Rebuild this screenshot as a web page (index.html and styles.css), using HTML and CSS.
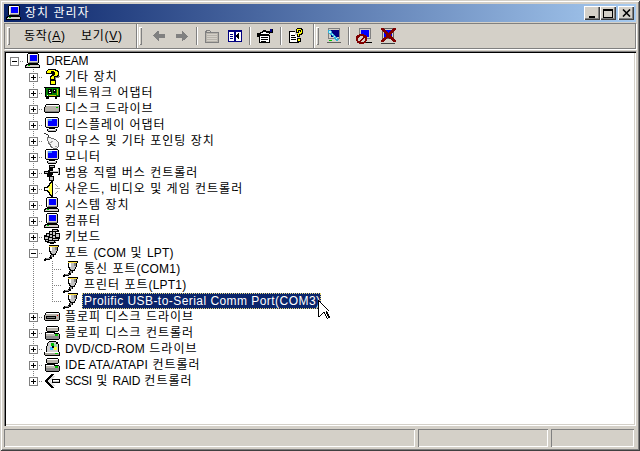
FILE: index.html
```html
<!DOCTYPE html>
<html lang="ko">
<head>
<meta charset="utf-8">
<title>장치 관리자</title>
<link rel="stylesheet" href="styles.css">
</head>
<body>
<svg class="defs" width="0" height="0" shape-rendering="crispEdges">
  <symbol id="i-pc" viewBox="0 0 16 16">
    <path d="M3 0h10v1h1v9h-1v1H3v-1H2V1h1z" fill="#000"/>
    <path d="M3 1h10v9H3z" fill="#d4d0c8"/><path d="M3 1h9v1H4v7H3z" fill="#fff"/>
    <path d="M5 2h7v6H5z" fill="#00f"/><path d="M4 9h9v1H4z" fill="#808080"/>
    <path d="M1 11h13v1h1v3H0v-3h1z" fill="#000"/><path d="M2 12h12v2H1v-1h1z" fill="#d4d0c8"/><path d="M3 12h2v1H3z" fill="#0c0"/>
  </symbol>
  <symbol id="i-mon" viewBox="0 0 16 16">
    <path d="M2 0h12v1h1v9h-1v1H2v-1H1V1h1z" fill="#000"/>
    <path d="M2 1h12v9H2z" fill="#d4d0c8"/><path d="M2 1h11v1H3v7H2z" fill="#fff"/>
    <path d="M4 2h9v7H4z" fill="#00f"/><path d="M4 2h4v2H4z" fill="#4090ff"/>
    <path d="M5 11h6v1h2v2h-1v1H4v-1H3v-2h2z" fill="#000"/><path d="M4 12h8v2H4z" fill="#c0c0c0"/><path d="M5 12h6v1H5z" fill="#fff"/>
  </symbol>
  <symbol id="i-q" viewBox="0 0 16 16">
    <path d="M4 0h8v1h2v1h1v5h-1v1h-3v3H6V7h1V6h1V3H8v2H2V2h1V1h1z" fill="#000"/>
    <path d="M4 1h7v1h2v1h1v3h-1v1h-3v3H7V8h1V7h2V6h1V3h-1V2H7v2H3V2h1z" fill="#ff0"/>
    <path d="M6 11h6v5H6z" fill="#000"/><path d="M7 12h4v3H7z" fill="#ff0"/>
    <path d="M14 7h2v1h-1v1h-3v2h-1V8h3z" fill="#808080"/>
  </symbol>
  <symbol id="i-net" viewBox="0 0 16 16">
    <path d="M0 2h16v10h-3v2h-2v-2H5v2H2v-2H1V3H0z" fill="#000"/>
    <path d="M2 3h13v8H2z" fill="#008000"/><path d="M4 4h4v5H4zM9 4h3v4H9z" fill="#000"/><path d="M13 4h1v6h-1zM5 10h7v1H5z" fill="#c8c800"/><path d="M3 10h1v1H3zM5 5h1v1H5zM5 7h2v1H5zM10 5h1v1h-1z" fill="#fff"/>
  </symbol>
  <symbol id="i-disk" viewBox="0 0 16 16">
    <path d="M2 3h13v1h1v7h-1v1H1v-1H0V6h1V4h1z" fill="#000"/>
    <path d="M2 4h13v1H2z" fill="#fff"/><path d="M1 6h14v5H1zM2 5h13v1H2z" fill="#b8b4ac"/><path d="M12 6h2v1h-2z" fill="#0c0"/><path d="M15 5h0v6h0z" fill="#606060"/><path d="M1 10h14v1H1z" fill="#808080"/>
  </symbol>
  <symbol id="i-floppy" viewBox="0 0 16 16">
    <path d="M2 3h13v1h1v7h-1v1H1v-1H0V6h1V4h1z" fill="#000"/>
    <path d="M1 6h14v5H1zM2 5h13v1H2z" fill="#b8b4ac"/><path d="M2 4h13v1H2z" fill="#fff"/><path d="M2 7h10v3H2z" fill="#000"/><path d="M3 8h8v1H3z" fill="#808080"/><path d="M13 6h1v1h-1z" fill="#e00"/>
  </symbol>
  <symbol id="i-mouse" viewBox="0 0 16 16">
    <path d="M0 0h2v1h2v1h1v3H4V2H2V1H0z" fill="#303030"/>
    <path d="M3 4h4v1h3v1h2v1h1v1h1v1h1v5h-1v1h-1v1H9v-1H7v-1H6v-2H5v-1H4V8H3z" fill="#707070"/>
    <path d="M4 5h3v1h3v1h2v1h1v1h1v5h-1v1H9v-1H8v-1H7v-2H6v-1H5V8H4z" fill="#f4f4f4"/><path d="M5 9h2V8h2v1H8v1H6zM11 13h2v1h-2z" fill="#a8a8a8"/>
  </symbol>
  <symbol id="i-usb" viewBox="0 0 16 16">
    <path d="M5 0h6v3H9v3h5V3h2v7h-2V8H9v2H8v3H5v-1H3V9H0V6h4V5h1V3H5z" fill="#000"/>
    <path d="M6 1h4v1H6zM14 4h1v5h-1zM1 7h3v1H1zM6 6h8v1H6z" fill="#c0c0c0"/>
    <path d="M5 11h5v5H5z" fill="#000"/><path d="M6 12h3v3H6z" fill="#c0c0c0"/>
  </symbol>
  <symbol id="i-snd" viewBox="0 0 16 16">
    <path d="M7 0h2v16H7v-1H6v-1H5v-2H4v-1H3v-1H0V6h3V5h1V4h1V2h1V1h1z" fill="#000"/>
    <path d="M7 2h1v12H7v-1H6v-2H5v-1H4V9H1V7h3V6h1V5h1V3h1z" fill="#ffff40"/>
    <path d="M1 7h4v2H1z" fill="#fff"/>
    <path d="M11 7h5v1h-5zM11 3h1v1h1v1h1v1h-1V5h-1V4h-1zM11 12h1v-1h1v-1h1v1h-1v1h-1v1h-1z" fill="#a0a0a0"/>
  </symbol>
  <symbol id="i-kbd" viewBox="0 0 16 16">
    <path d="M8 0h6v1h1v2h-3v1h4v6h-1v2h-3v2h-2v1H6v-1H3v-1H1v-2H0V6h2V4h3V2h3z" fill="#000"/>
    <path d="M9 1h4v1H9zM6 3h2v2H6zM9 3h2v3H9zM3 5h2v2H3zM12 5h3v3h-3zM6 6h2v2H6zM1 8h3v2H1zM9 7h2v2H9zM5 9h3v2H5zM9 10h5v1H9zM2 11h2v1H2zM5 12h5v1H5zM11 12h1v1h-1z" fill="#c8c8c8"/>
  </symbol>
  <symbol id="i-port" viewBox="0 0 16 16">
    <path d="M5 0h10v2h-1v4h-1v2h-1v2h-2v2H8v2H6v1H2v1H0v-2h1v-1h4v-1h1v-2h1V9H6V7H5V2H5z" fill="#000"/>
    <path d="M5 1h9v1H5z" fill="#ffe040"/><path d="M6 2h7v4h-1v2h-1v1H8V8H7V6H6z" fill="#c0c0c0"/><path d="M6 2h2v4H6z" fill="#fff"/><path d="M11 2h2v3h-2z" fill="#808080"/>
    <path d="M2 13h4v1H2z" fill="#909090"/><path d="M7 10h2v2H7z" fill="#909090"/>
  </symbol>
  <symbol id="i-drv" viewBox="0 0 16 16">
    <path d="M3 1h11v1h1v4h-1v1H3V6H2V2h1z" fill="#000"/><path d="M3 2h11v1H3z" fill="#fff"/><path d="M3 3h11v3H3z" fill="#b8b4ac"/>
    <path d="M1 7h10v1h4v1h1v5h-1v1H2v-1H1V7z" fill="#000"/><path d="M2 8h8v1h5v2H2z" fill="#b8b4ac"/><path d="M2 8h8v1H2z" fill="#fff"/><path d="M2 11h13v3H2z" fill="#8c8c8c"/><path d="M11 9h3v2h-3z" fill="#00c000"/>
  </symbol>
  <symbol id="i-dvd" viewBox="0 0 16 16">
    <path d="M5 0h7v1h2v2h1v8h1v4H1v-1H0v-3h2V5h1V2h1V1h1z" fill="#000"/>
    <path d="M5 1h7v2h2v8H3V5h1V2h1z" fill="#d0d0d0"/><path d="M7 2h3v3H7z" fill="#00c000"/><path d="M10 3h3v3h-3z" fill="#a0e0a0"/><path d="M6 6h3v3H6z" fill="#40c0ff"/><path d="M10 6h3v3h-3z" fill="#ffff40"/><path d="M8 5h2v2H8z" fill="#000"/>
    <path d="M1 11h14v3H1z" fill="#a8a49c"/><path d="M1 11h14v1H1z" fill="#fff"/><path d="M11 12h3v1h-3z" fill="#0c0"/>
  </symbol>
  <symbol id="i-scsi" viewBox="0 0 16 16">
    <path d="M7 1h3v1H9v1H8v1H7v1H6v1H5v1H4v2h1v1h1v1h1v1h1v1h1v1h1v1H7v-1H6v-1H5v-1H4v-1H3v-1H2v-1H1V7h1V6h1V5h1V4h1V3h1V2h1z" fill="#000"/>
    <path d="M8 3h3v1h-1v1H9v1H8v1H7v2h1v1h1v1h1v1h1v1H8v-1H7v-1H6v-1H5V9H4V7h1V6h1V5h1V4h1z" fill="#e0e0e0"/>
    <path d="M8 6h8v4H8z" fill="#000"/><path d="M9 7h6v2H9z" fill="#c0c0c0"/><path d="M9 7h6v1H9z" fill="#fff"/>
  </symbol>
</svg>

<div class="window">
  <header class="titlebar">
    <svg class="ico"><use href="#i-pc"/></svg>
    <span class="title">장치 관리자</span>
    <div class="caption">
      <span class="capbtn"><svg viewBox="0 0 9 9" width="9" height="9" shape-rendering="crispEdges"><path d="M1 7h6v2H1z"/></svg></span>
      <span class="capbtn"><svg viewBox="0 0 10 9" width="10" height="9" shape-rendering="crispEdges"><path d="M0 0h10v2H0zM0 2h1v7H0zM9 2h1v7H9zM0 8h10v1H0z"/></svg></span>
      <span class="capbtn capclose"><svg viewBox="0 0 9 8" width="9" height="8"><path d="M1 .5L8 7.500M8 .5L1 7.500" stroke="#000" stroke-width="1.600"/></svg></span>
    </div>
  </header>

  <div class="rebar">
    <span class="grip"></span>
    <nav class="menu">
      <span class="menu-item">동작(<u>A</u>)</span>
      <span class="menu-item">보기(<u>V</u>)</span>
    </nav>
    <span class="band-sep"></span>
    <span class="grip"></span>
    <div class="tools tools-a">
      <svg class="tool" viewBox="0 0 16 16" shape-rendering="crispEdges"><path d="M7 3h1v3h6v4H8v3H7v-1H6v-1H5v-1H4V9H3V8H2V7h1V6h1V5h1V4h1V3z" fill="#808080"/></svg>
      <svg class="tool next" viewBox="0 0 16 16" shape-rendering="crispEdges"><path d="M8 3h1v1h1v1h1v1h1v1h1v1h1v1h-1v1h-1v1h-1v1H9v1H8v-3H2V6h6z" fill="#808080"/></svg>
      <span class="sep"></span>
      <svg class="tool" viewBox="0 0 16 16" shape-rendering="crispEdges"><path d="M1 3h1V2h4v1h1v1h8v11H1z" fill="#808080"/><path d="M2 5h12v9H2z" fill="#b8b4ac"/><path d="M3 3h3v1H3zM3 6h10v1H3zM3 8h10v1H3zM3 10h10v1H3zM3 12h10v1H3z" fill="#d4d0c8"/></svg>
      <svg class="tool next" viewBox="0 0 16 16" shape-rendering="crispEdges"><path d="M1 2h14v12H1z" fill="#000080"/><path d="M2 4h5v9H2zM9 4h5v9H9z" fill="#fff"/><path d="M3 6h3v1H3zM3 8h3v1H3zM3 10h3v1H3z" fill="#000080"/><path d="M12 5v6h-1v-1h-1V9H9V7h1V6h1V5z" fill="#000"/></svg>
      <span class="sep"></span>
      <svg class="tool" viewBox="0 0 16 16" shape-rendering="crispEdges"><path d="M0 5h3V4h2V3h1V2h3v1h4V1h3v4h-3v1h-1v1h1v8H2V9H0z" fill="#000"/><path d="M3 8h9v6H3z" fill="#fff"/><path d="M4 9h7v1H4zM4 11h7v1H4zM4 13h5v1H4z" fill="#000"/><path d="M6 4h3v1h3v1H4V5h2z" fill="#fff"/><path d="M13 1h2v3h-2z" fill="#000080"/></svg>
      <span class="sep sep-help"></span>
      <svg class="tool help" viewBox="0 0 16 16" shape-rendering="crispEdges"><path d="M1 3h6v1H2v10h8v-2h1v3H1z" fill="#000"/><path d="M2 4h5v3h2v5h1v2H2z" fill="#fff"/><path d="M3 7h4v1H3zM3 9h5v1H3zM3 11h5v1H3z" fill="#000"/><path d="M9 0h5v1h1v5h-1v1h-2v2H9V6h2V5h1V3h-1v2H8V1h1z" fill="#000"/><path d="M9 1h4v1h1v3h-1v1h-2v2h-1V5h2V4h1V2h-3v2H9z" fill="#ff0"/><path d="M9 10h4v4H9z" fill="#000"/><path d="M10 11h2v2h-2z" fill="#ff0"/></svg>
    </div>
    <span class="band-sep band-sep-b"></span>
    <span class="grip"></span>
    <div class="tools tools-b">
      <svg class="tool" viewBox="0 0 16 16" shape-rendering="crispEdges"><path d="M2 0h12v11H2z" fill="#808080"/><path d="M3 1h10v9H3z" fill="#d4d0c8"/><path d="M5 2h8v7H5z" fill="#000080"/><path d="M1 11h14v4H1z" fill="#d4d0c8"/><path d="M1 14h14v1H1z" fill="#606060"/><path d="M3 12h3v1H3z" fill="#0c0"/><path d="M2 2h3v1h1v2h1v1h1v1h1v1h1v1h1v1h1v1h1v1h-1v1h-2v-1H9v-1H8V9H7V8H6V7H4V6H3V5H2z" fill="#30b0d8"/><path d="M3 3h2v2H3zM6 6h1v1H6zM8 8h1v1H8zM10 10h1v1h-1z" fill="#c0f0ff"/></svg>
      <span class="sep"></span>
      <svg class="tool" viewBox="0 0 16 16" shape-rendering="crispEdges"><path d="M3 0h12v11H3z" fill="#808080"/><path d="M4 1h10v9H4z" fill="#d4d0c8"/><path d="M5 2h8v7H5z" fill="#00f"/><path d="M10 12h6v3h-6z" fill="#d4d0c8"/><path d="M10 14h6v1h-6z" fill="#000"/><path d="M3 6h5v1h2v1h1v5h-1v2H8v1H3v-1H1v-2H0V8h1V7h2z" fill="#800000"/><path d="M4 8h3v1L3 13H2v-3h1V9h1zM8 10h1v3H8v1H5v-1z" fill="#d4d0c8"/></svg>
      <svg class="tool next-wide" viewBox="0 0 16 16" shape-rendering="crispEdges"><path d="M2 0h12v11H2z" fill="#606060"/><path d="M3 1h10v9H3z" fill="#d4d0c8"/><path d="M4 2h8v7H4z" fill="#00f"/><path d="M1 11h14v4H1z" fill="#d4d0c8"/><path d="M1 15h14v1H1z" fill="#404040"/><path d="M1 0h3v1h1v1h1v1h1v1h1v1h1V4h1V3h1V2h1V1h1V0h3v2h-1v1h-1v1h-1v1h-1v1h-1v2h1v1h1v1h1v1h1v1h1v2h-3v-1h-1v-1h-1v-1H9v-1H7v1H6v1H5v1H4v1H1v-2h1v-1h1v-1h1v-1h1V9h1V6H5V5H4V4H3V3H2V2H1z" fill="#800000"/></svg>
    </div>
  </div>

  <main class="tree">
    <div class="row"><span class="cell root"><i class="box minus"></i></span><svg class="ico"><use href="#i-pc"/></svg><span class="label dream">DREAM</span></div>
    <div class="row"><span class="cell"></span><span class="cell tee"><i class="box"></i></span><svg class="ico"><use href="#i-q"/></svg><span class="label">기타 장치</span></div>
    <div class="row"><span class="cell"></span><span class="cell tee"><i class="box"></i></span><svg class="ico"><use href="#i-net"/></svg><span class="label">네트워크 어댑터</span></div>
    <div class="row"><span class="cell"></span><span class="cell tee"><i class="box"></i></span><svg class="ico"><use href="#i-disk"/></svg><span class="label">디스크 드라이브</span></div>
    <div class="row"><span class="cell"></span><span class="cell tee"><i class="box"></i></span><svg class="ico"><use href="#i-mon"/></svg><span class="label">디스플레이 어댑터</span></div>
    <div class="row"><span class="cell"></span><span class="cell tee"><i class="box"></i></span><svg class="ico"><use href="#i-mouse"/></svg><span class="label">마우스 및 기타 포인팅 장치</span></div>
    <div class="row"><span class="cell"></span><span class="cell tee"><i class="box"></i></span><svg class="ico"><use href="#i-mon"/></svg><span class="label">모니터</span></div>
    <div class="row"><span class="cell"></span><span class="cell tee"><i class="box"></i></span><svg class="ico"><use href="#i-usb"/></svg><span class="label">범용 직렬 버스 컨트롤러</span></div>
    <div class="row"><span class="cell"></span><span class="cell tee"><i class="box"></i></span><svg class="ico"><use href="#i-snd"/></svg><span class="label">사운드, 비디오 및 게임 컨트롤러</span></div>
    <div class="row"><span class="cell"></span><span class="cell tee"><i class="box"></i></span><svg class="ico"><use href="#i-pc"/></svg><span class="label">시스템 장치</span></div>
    <div class="row"><span class="cell"></span><span class="cell tee"><i class="box"></i></span><svg class="ico"><use href="#i-pc"/></svg><span class="label">컴퓨터</span></div>
    <div class="row"><span class="cell"></span><span class="cell tee"><i class="box"></i></span><svg class="ico"><use href="#i-kbd"/></svg><span class="label">키보드</span></div>
    <div class="row"><span class="cell"></span><span class="cell tee"><i class="box minus"></i></span><svg class="ico"><use href="#i-port"/></svg><span class="label">포트 <span class="lat">(COM</span> 및 <span class="lat">LPT)</span></span></div>
    <div class="row"><span class="cell"></span><span class="cell vert"></span><span class="cell tee"></span><svg class="ico"><use href="#i-port"/></svg><span class="label">통신 포트<span class="lat">(COM1)</span></span></div>
    <div class="row"><span class="cell"></span><span class="cell vert"></span><span class="cell tee"></span><svg class="ico"><use href="#i-port"/></svg><span class="label">프린터 포트<span class="lat">(LPT1)</span></span></div>
    <div class="row"><span class="cell"></span><span class="cell vert"></span><span class="cell elbow"></span><svg class="ico"><use href="#i-port"/></svg><span class="label selected">Prolific USB-to-Serial Comm Port(COM3)</span></div>
    <div class="row"><span class="cell"></span><span class="cell tee"><i class="box"></i></span><svg class="ico"><use href="#i-floppy"/></svg><span class="label">플로피 디스크 드라이브</span></div>
    <div class="row"><span class="cell"></span><span class="cell tee"><i class="box"></i></span><svg class="ico"><use href="#i-drv"/></svg><span class="label">플로피 디스크 컨트롤러</span></div>
    <div class="row"><span class="cell"></span><span class="cell tee"><i class="box"></i></span><svg class="ico"><use href="#i-dvd"/></svg><span class="label"><span class="lat">DVD/CD-ROM</span> 드라이브</span></div>
    <div class="row"><span class="cell"></span><span class="cell tee"><i class="box"></i></span><svg class="ico"><use href="#i-drv"/></svg><span class="label"><span class="lat">IDE ATA/ATAPI</span> 컨트롤러</span></div>
    <div class="row"><span class="cell"></span><span class="cell elbow"><i class="box"></i></span><svg class="ico"><use href="#i-scsi"/></svg><span class="label"><span class="lat tight">SCSI</span> 및 <span class="lat tight">RAID</span> 컨트롤러</span></div>
    <svg class="cursor" width="14" height="22" viewBox="0 0 14 22" shape-rendering="crispEdges"><path d="M0 0h1v1h1v1h1v1h1v1h1v1h1v1h1v1h1v1h1v1h1v1h1v1H9v1h1v2h1v2h1v2h-2v1H9v-1H8v-2H7v-2H6v-1H5v1H4v1H3v1H2v1H0z" fill="#000"/><path d="M1 2h1v1h1v1h1v1h1v1h1v1h1v1h1v1h1v1h1v1H8v3h1v2h1v2H9v-2H8v-2H7v-2H5v1H4v1H3v1H2v1H1z" fill="#fff"/></svg>
  </main>

  <footer class="status">
    <span class="pane pane-a"></span>
    <span class="pane pane-b"></span>
    <span class="pane pane-c"></span>
  </footer>
</div>
</body>
</html>
```

FILE: styles.css
```css
* { box-sizing: border-box; }
html, body { margin: 0; padding: 0; }
body { width: 640px; height: 451px; overflow: hidden; background: #d4d0c8; font-family: "Liberation Sans", "Noto Sans CJK KR", sans-serif; font-size: 12px; line-height: 16px; color: #000; }
.defs { position: absolute; }
.window { width: 640px; height: 451px; padding: 4px; background: #d4d0c8; box-shadow: inset 1px 1px 0 #d4d0c8, inset -1px -1px 0 #404040, inset 2px 2px 0 #fff, inset -2px -2px 0 #808080; display: flex; flex-direction: column; }
.ico { width: 16px; height: 16px; flex: none; display: block; }

.titlebar { height: 18px; flex: none; display: flex; align-items: center; background: linear-gradient(90deg, #0a246a, #a6caf0); color: #fff; padding-left: 2px; }
.title { margin-left: 3px; letter-spacing: 1px; }
.caption { margin-left: auto; margin-right: 2px; display: flex; }
.capbtn { width: 16px; height: 14px; display: flex; align-items: center; justify-content: center; background: #d4d0c8; box-shadow: inset 1px 1px 0 #fff, inset -1px -1px 0 #404040, inset -2px -2px 0 #808080; }
.capclose { margin-left: 2px; }

.rebar { margin-top: 1px; height: 26px; flex: none; display: flex; align-items: center; box-shadow: inset 1px 1px 0 #808080, inset -1px -1px 0 #808080, 1px 1px 0 #fff; }
.grip { width: 3px; height: 18px; flex: none; margin-left: 3px; box-shadow: inset 1px 1px 0 #fff, inset -1px -1px 0 #808080; }
.menu { display: flex; margin-left: 14px; flex: none; width: 112px; }
.menu-item { white-space: nowrap; letter-spacing: .7px; }
.menu-item:first-child { width: 57px; }
.band-sep { width: 2px; height: 24px; flex: none; background: linear-gradient(90deg, #808080 50%, #fff 50%); }
.band-sep + .grip { margin-left: 1px; }
.band-sep-b { margin-left: 9px; }
.tools { display: flex; align-items: center; flex: none; }
.tools-a { margin-left: 9px; }
.tools-b { margin-left: 7px; }
.tool { width: 16px; height: 16px; flex: none; display: block; }
.next { margin-left: 7px; }
.next-wide { margin-left: 8px; }
.sep { width: 2px; height: 18px; flex: none; margin: 0 6px; background: linear-gradient(90deg, #808080 50%, #fff 50%); }
.sep-help { margin: 0 6px 0 7px; }

.tree { position: relative; flex: 1; margin-top: 2px; padding: 2px 0 0 1px; background: #fff; box-shadow: inset 1px 1px 0 #808080, inset 2px 2px 0 #000, inset -1px -1px 0 #fff, inset -2px -2px 0 #d4d0c8; }
.row { height: 16px; display: flex; align-items: center; white-space: nowrap; }
.cell { position: relative; width: 19px; height: 16px; flex: none; }
.row > .ico { margin-left: 1px; }
.label { margin-left: 4px; letter-spacing: 1px; height: 16px; padding: 0 1px; }
.lat { letter-spacing: .2px; }
.lat.tight { letter-spacing: -.3px; }
.dream { letter-spacing: -.2px; }
.tee::before, .vert::before, .elbow::before { content: ""; position: absolute; left: 9px; top: 0; width: 1px; height: 16px; background: repeating-linear-gradient(180deg, #808080 0 1px, transparent 1px 2px); }
.elbow::before { height: 9px; }
.tee::after, .elbow::after, .root::after { content: ""; position: absolute; left: 9px; top: 8px; width: 10px; height: 1px; background: repeating-linear-gradient(90deg, #808080 0 1px, transparent 1px 2px); }
.box { position: absolute; z-index: 1; left: 5px; top: 4px; width: 9px; height: 9px; background: #fff; border: 1px solid #808080; }
.box::before { content: ""; position: absolute; left: 1px; top: 3px; width: 5px; height: 1px; background: #000; }
.box::after { content: ""; position: absolute; left: 3px; top: 1px; width: 1px; height: 5px; background: #000; }
.box.minus::after { display: none; }
.selected { margin-left: 3px; padding: 0 1px 0 2px; background: #0a246a; color: #fff; letter-spacing: .45px; outline: 1px dotted #e8d878; outline-offset: -1px; }
.cursor { position: absolute; left: 314px; top: 249px; }

.status { margin-top: 3px; height: 18px; flex: none; display: flex; gap: 3px; }
.pane { height: 18px; box-shadow: inset 1px 1px 0 #808080, inset -1px -1px 0 #fff; }
.pane-a { width: 411px; }
.pane-b { width: 130px; }
.pane-c { width: 83px; }
```
